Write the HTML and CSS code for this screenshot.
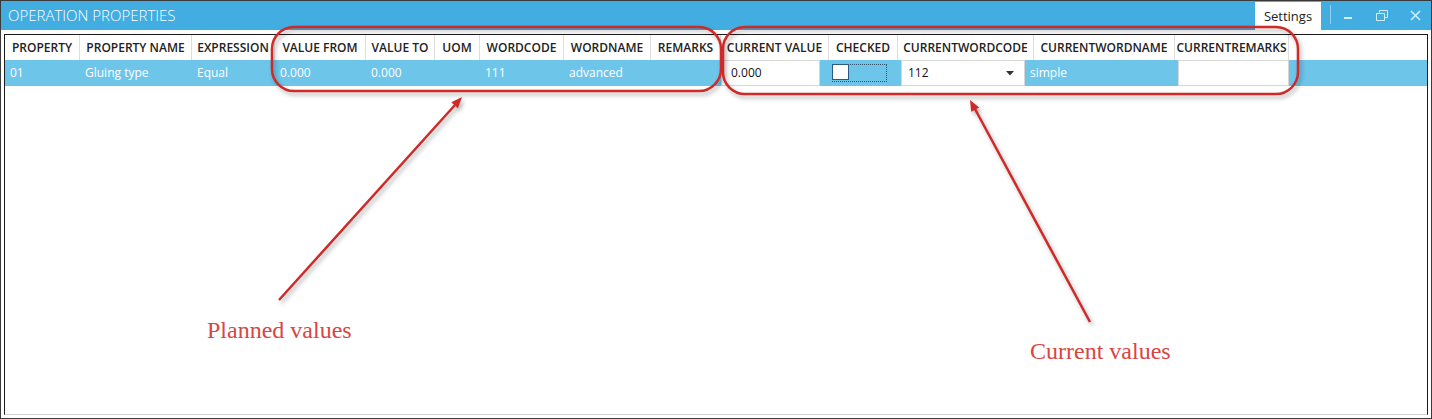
FILE: index.html
```html
<!DOCTYPE html>
<html lang="en">
<head>
  <meta charset="UTF-8" />
  <title>Operation Properties</title>
  <link rel="stylesheet" href="styles.css">
</head>
<body>
  <div class="window">
    <div class="titlebar">
      <div class="title">OPERATION PROPERTIES</div>
      <div class="settings">Settings</div>
      <div class="sep"></div>
      <div class="winbtn">
        <svg width="10" height="10" viewBox="0 0 10 10"><rect x="1" y="6" width="8" height="2" fill="currentColor"/></svg>
      </div>
      <div class="winbtn">
        <svg width="12" height="11" viewBox="0 0 12 11"><path d="M3.5 2.5V0.5H11.5V7.5H8.5M0.5 3.5H8.5V10.5H0.5Z" fill="none" stroke="currentColor"/></svg>
      </div>
      <div class="winbtn">
        <svg width="11" height="11" viewBox="0 0 11 11"><path d="M1 1L10 10M10 1L1 10" stroke="currentColor" stroke-width="1.6"/></svg>
      </div>
    </div>

    <div class="content">
      <div class="grid">
        <div class="grid-head">
          <div class="hcell">PROPERTY</div>
          <div class="hcell">PROPERTY NAME</div>
          <div class="hcell">EXPRESSION</div>
          <div class="hcell">VALUE FROM</div>
          <div class="hcell">VALUE TO</div>
          <div class="hcell">UOM</div>
          <div class="hcell">WORDCODE</div>
          <div class="hcell">WORDNAME</div>
          <div class="hcell">REMARKS</div>
          <div class="hcell">CURRENT VALUE</div>
          <div class="hcell">CHECKED</div>
          <div class="hcell">CURRENTWORDCODE</div>
          <div class="hcell">CURRENTWORDNAME</div>
          <div class="hcell">CURRENTREMARKS</div>
          <div class="hcell filler"></div>
        </div>
        <div class="grid-row selected">
          <div class="cell">01</div>
          <div class="cell">Gluing type</div>
          <div class="cell">Equal</div>
          <div class="cell">0.000</div>
          <div class="cell">0.000</div>
          <div class="cell"></div>
          <div class="cell">111</div>
          <div class="cell">advanced</div>
          <div class="cell"></div>
          <div class="cell editor value">0.000</div>
          <div class="cell check">
            <div class="focus"><div class="box"></div></div>
          </div>
          <div class="cell editor combo">
            <span>112</span>
            <svg width="8" height="5" viewBox="0 0 8 5"><path d="M0 0H8L4 4.5Z" fill="#333"/></svg>
          </div>
          <div class="cell">simple</div>
          <div class="cell editor"></div>
          <div class="cell"></div>
        </div>
      </div>
    </div>

    <!-- annotations drawn over the screenshot -->
    <svg class="annot" width="1432" height="419" viewBox="0 0 1432 419">
      <g fill="none" stroke="#cf2a27" stroke-width="2.5">
        <rect x="272" y="27" width="449" height="64" rx="22" />
        <rect x="723" y="27" width="575" height="67" rx="22" />
        <line x1="279" y1="300" x2="455" y2="105" />
        <line x1="1090" y1="322" x2="975" y2="109" />
      </g>
      <g fill="#cf2a27">
        <polygon points="462,97 457.9,108.2 451.3,102.2" />
        <polygon points="970,100 979.2,107.6 971.2,111.8" />
      </g>
    </svg>
    <div class="note planned">Planned values</div>
    <div class="note current">Current values</div>
  </div>
</body>
</html>
```

FILE: styles.css
```css
html, body {
  margin: 0;
  padding: 0;
  background: #fff;
}
.window {
  position: relative;
  width: 1432px;
  height: 419px;
  box-sizing: border-box;
  border: 1px solid #3a3a3a;
  display: flex;
  flex-direction: column;
  font-family: 'Open Sans', 'Noto Sans', sans-serif;
  overflow: hidden;
}
.titlebar {
  height: 29px;
  background: #41ade0;
  display: flex;
  align-items: stretch;
  flex-shrink: 0;
}
.title {
  padding-left: 7px;
  color: #fff;
  font-size: 15px;
  font-weight: 300;
  line-height: 29px;
}
.settings {
  margin-left: auto;
  margin-top: 1px;
  width: 66px;
  background: #fff;
  color: #222;
  font-size: 13px;
  line-height: 28px;
  text-align: center;
}
.sep {
  width: 1px;
  margin: 4px 0 6px 9px;
  background: rgba(255, 255, 255, 0.45);
}
.winbtn {
  width: 34px;
  display: flex;
  align-items: center;
  justify-content: center;
  color: #d4ecf8;
}
.winbtn:last-child { width: 32px; }

.content {
  flex: 1;
  display: flex;
  padding: 4px 3px 3px;
}
.grid {
  flex: 1;
  border: 1px solid #1c1c1c;
  border-bottom-color: #d0d0d0;
}
.grid-head, .grid-row {
  display: grid;
  grid-template-columns: 75px 112px 83px 91px 69px 45px 84px 87px 70px 108px 69px 136px 141px 114px 1fr;
}
.grid-head {
  height: 25px;
}
.hcell {
  box-sizing: border-box;
  border-right: 1px solid #dedede;
  font-size: 12px;
  font-weight: 600;
  color: #222;
  line-height: 25px;
  text-align: center;
  white-space: nowrap;
}
.hcell.filler { border-right: none; }

.grid-row {
  height: 26px;
  grid-template-columns: 75px 112px 83px 91px 69px 45px 84px 87px 70px 99px 81px 124px 153px 111px 1fr;
}
.grid-row.selected {
  background: #6ec5ea;
}
.cell {
  box-sizing: border-box;
  padding-left: 5px;
  font-size: 12px;
  color: #fff;
  line-height: 26px;
  white-space: nowrap;
}
.cell.editor {
  background: #fff;
  color: #111;
  border: 1px solid #d6d6d6;
  line-height: 24px;
}
.cell.value { padding-left: 9px; }
.cell.combo {
  display: flex;
  align-items: center;
  justify-content: space-between;
  padding: 0 10px 0 6px;
}
.cell.check {
  padding: 4px 0 0 12px;
}
.focus {
  width: 55px;
  height: 18px;
  box-sizing: border-box;
  border: 1px dotted #2f4f66;
}
.box {
  width: 17px;
  height: 16px;
  box-sizing: border-box;
  margin: -1px 0 0 -1px;
  background: #fff;
  border: 1px solid #2c5a85;
}

/* annotation layer */
.annot {
  position: absolute;
  left: -1px;
  top: -1px;
  pointer-events: none;
  filter: drop-shadow(2px 3px 2px rgba(0, 0, 0, 0.3));
}
.note {
  position: absolute;
  font-family: 'Liberation Serif', 'Times New Roman', serif;
  font-size: 24px;
  line-height: 24px;
  color: #d9453f;
}
.note.planned { left: 206px; top: 317px; }
.note.current { left: 1029px; top: 338px; }
```
